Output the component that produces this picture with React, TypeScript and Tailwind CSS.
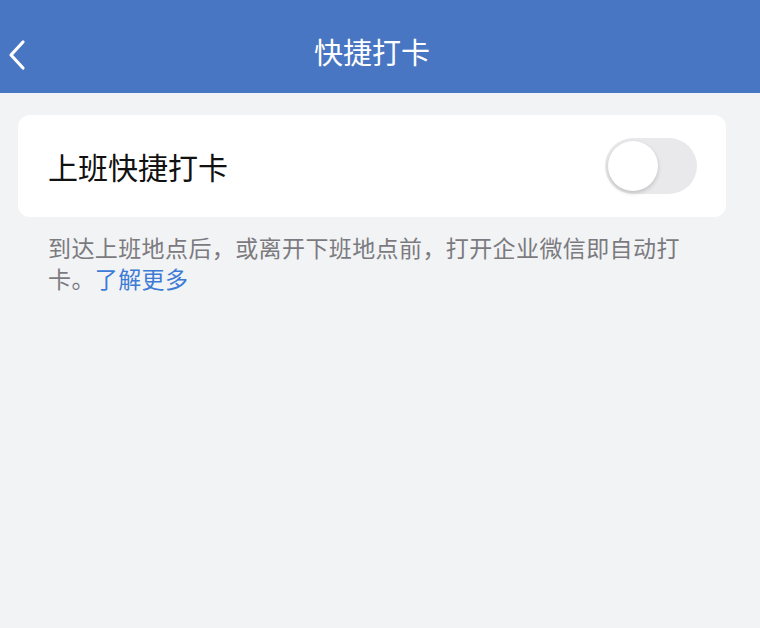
import React, { useState } from 'react'

const App = () => {
  const [on, setOn] = useState(false)
  return (
    <div
      className="w-[760px] h-[628px] bg-[#f2f3f5] flex flex-col"
      style={{ fontFamily: '"Noto Sans CJK SC", "Noto Sans", sans-serif' }}
    >
      <div className="h-[93px] bg-[#4876c2] flex items-center relative shrink-0">
        <svg className="absolute left-[6px] top-[39px]" width="22" height="32" viewBox="0 0 22 32" fill="none">
          <path d="M17 3 L5 16 L17 29" stroke="white" strokeWidth="3.2" strokeLinecap="round" strokeLinejoin="round" />
        </svg>
        <p className="w-full text-center text-white text-[29px] leading-none pt-[10px] pr-[16px]">快捷打卡</p>
      </div>
      <div className="pl-[18px] pr-[34px] pt-[22px]">
        <div className="bg-white rounded-[12px] h-[102px] flex items-center justify-between pl-[30px] pr-[29px]">
          <p className="text-[30px] text-[#111] leading-none">上班快捷打卡</p>
          <button
            onClick={() => setOn(!on)}
            className={`w-[92px] h-[56px] rounded-full p-[3px] flex items-center ${on ? 'bg-[#4876c2] justify-end' : 'bg-[#e9e9eb] justify-start'}`}
          >
            <span className="block w-[50px] h-[50px] rounded-full bg-white shadow-[0_2px_4px_rgba(0,0,0,0.18)]" />
          </button>
        </div>
        <p className="pl-[30px] pr-[10px] pt-[15px] text-[23px] tracking-[0.4px] leading-[31px] text-[#7b7b7f]">
          到达上班地点后，或离开下班地点前，打开企业微信即自动打卡。<span className="text-[#3d7bd6]">了解更多</span>
        </p>
      </div>
    </div>
  )
}

export default App
